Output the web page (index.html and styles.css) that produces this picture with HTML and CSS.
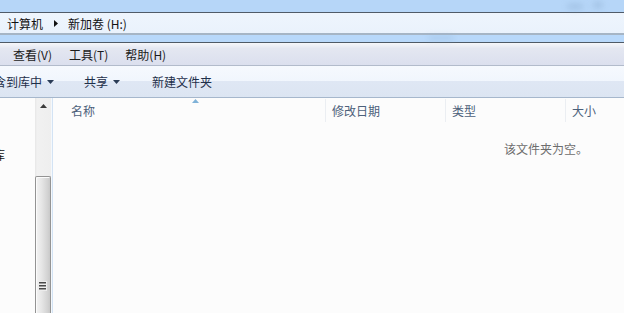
FILE: index.html
```html
<!DOCTYPE html>
<html lang="zh-CN">
<head>
<meta charset="utf-8">
<title>新加卷 (H:)</title>
<link rel="stylesheet" href="styles.css">
</head>
<body>
<div class="window">
  <div class="glass-top">
    <span class="glass-blur g1"></span>
    <span class="glass-blur g2"></span>
  </div>
  <div class="addr">
    <span class="crumb">计算机</span>
    <svg class="crumb-sep" width="4" height="7" viewBox="0 0 4 7"><path d="M0 0 L4 3.5 L0 7 Z" fill="#111"/></svg>
    <span class="crumb">新加卷 (H:)</span>
  </div>
  <div class="glass-mid"><span class="glass-blur g3"></span></div>
  <div class="menu">
    <span class="menu-item">查看(V)</span>
    <span class="menu-item">工具(T)</span>
    <span class="menu-item">帮助(H)</span>
  </div>
  <div class="cmd">
    <span class="cmd-item first">包含到库中<svg class="drop" width="7" height="4" viewBox="0 0 7 4"><path d="M0 0 H7 L3.5 4 Z" fill="#2a3c56"/></svg></span>
    <span class="cmd-item">共享<svg class="drop" width="7" height="4" viewBox="0 0 7 4"><path d="M0 0 H7 L3.5 4 Z" fill="#2a3c56"/></svg></span>
    <span class="cmd-item">新建文件夹</span>
  </div>
  <div class="main">
    <div class="nav">
      <span class="nav-label">库</span>
    </div>
    <div class="scroll">
      <div class="scroll-up"><svg width="7" height="4" viewBox="0 0 7 4"><path d="M0 4 H7 L3.5 0 Z" fill="#3a3a3a"/></svg></div>
      <div class="thumb">
        <div class="grip"><i></i><i></i><i></i></div>
      </div>
    </div>
    <div class="splitter"></div>
    <div class="content">
      <div class="headers">
        <svg class="sort" width="7" height="4" viewBox="0 0 7 4"><path d="M0 4 H7 L3.5 0 Z" fill="#7fb2d8"/></svg>
        <div class="col c-name">名称</div>
        <div class="col c-date">修改日期</div>
        <div class="col c-type">类型</div>
        <div class="col c-size">大小</div>
      </div>
      <div class="empty">该文件夹为空。</div>
    </div>
  </div>
</div>
</body>
</html>
```
FILE: styles.css
```css
* { box-sizing: border-box; }
html, body {
  margin: 0;
  padding: 0;
}
body {
  width: 624px;
  height: 313px;
  overflow: hidden;
  background: #fcfcfc;
  font-family: "Noto Sans CJK SC", "Microsoft YaHei", sans-serif;
  font-size: 12px;
}
.window {
  display: flex;
  flex-direction: column;
  height: 313px;
}
.glass-top {
  position: relative;
  height: 12px;
  background: #b6d6f8;
  flex: none;
}
.glass-blur {
  position: absolute;
  background: #8eaed0;
  filter: blur(3px);
  border-radius: 4px;
  opacity: 0.55;
}
.g1 { left: 567px; top: 4px; width: 16px; height: 5px; }
.g2 { left: 593px; top: 2px; width: 10px; height: 6px; }
.g3 { left: 428px; top: 1px; width: 26px; height: 4px; opacity: 0.4; }
.addr {
  flex: none;
  height: 23px;
  border-top: 1px solid #505b68;
  border-bottom: 2px solid #a6b5c5;
  background: linear-gradient(#eef5fd, #eaf2fc);
  display: flex;
  align-items: center;
  padding: 1px 0 0 7px;
  color: #111;
  line-height: 20px;
}
.crumb-sep {
  margin: 0 10px 0 11px;
}
.glass-mid {
  position: relative;
  flex: none;
  height: 8px;
  background: #b8d8fa;
  border-bottom: 1px solid #4f5a66;
}
.menu {
  flex: none;
  height: 23px;
  border-bottom: 1px solid #b2bbcb;
  background: linear-gradient(#f6f7fa, #e4e7f1 25%, #dbdfee);
  display: flex;
  align-items: center;
  padding: 1px 0 0 13px;
  gap: 17px;
  color: #1b1b1b;
}
.menu-item { line-height: 20px; }
.cmd {
  flex: none;
  height: 32px;
  border-bottom: 1px solid #a6b7cc;
  background: linear-gradient(#f6f9fe, #f1f6fd 48%, #dfe7f4 50%, #dce5f2);
  display: flex;
  align-items: center;
  color: #1e2f4a;
}
.cmd-item {
  display: flex;
  align-items: center;
  line-height: 20px;
  margin-right: 32px;
}
.cmd-item.first {
  margin-left: -18px;
  margin-right: 30px;
}
.drop { margin-left: 5px; }
.main {
  flex: 1;
  display: flex;
  min-height: 0;
}
.nav {
  width: 35px;
  flex: none;
  overflow: hidden;
  background: #fcfcfc;
}
.nav-label {
  display: block;
  margin-left: -7px;
  margin-top: 50px;
  color: #111;
  line-height: 14px;
}
.scroll {
  width: 16px;
  flex: none;
  background: linear-gradient(90deg, #e6e6e6, #f1f1f1 2px, #eeeeee);
  display: flex;
  flex-direction: column;
}
.scroll-up {
  height: 16px;
  display: flex;
  justify-content: center;
  padding-top: 6px;
}
.scroll-up svg { display: block; }
.thumb {
  margin-top: 62px;
  flex: 1;
  border: 1px solid #939393;
  border-bottom: none;
  border-radius: 2px 2px 0 0;
  background: linear-gradient(90deg, #f3f3f3, #e6e6e6 40%, #d4d4d4 80%, #c9c9c9);
  box-shadow: inset 1px 1px 0 #fbfbfb;
}
.grip {
  margin: 104px 0 0 2px;
  width: 9px;
  height: 10px;
  background: #ececec;
  display: flex;
  flex-direction: column;
  justify-content: center;
  gap: 1px;
  padding: 0 1px;
}
.grip i {
  display: block;
  height: 2px;
  background: linear-gradient(#4a4a4a 50%, #9a9a9a 50%);
}
.splitter {
  width: 2px;
  flex: none;
  background: linear-gradient(90deg, #f4f8fc 50%, #d3e3f4 50%);
}
.content {
  flex: 1;
  background: #fcfcfc;
}
.headers {
  position: relative;
  display: flex;
  height: 24px;
  padding-top: 1px;
  color: #4c607a;
}
.sort {
  position: absolute;
  left: 139px;
  top: 1px;
}
.col {
  height: 23px;
  line-height: 24px;
  padding-left: 6px;
  border-right: 1px solid #ebeef2;
}
.c-name { width: 273px; padding-left: 18px; }
.c-date { width: 120px; }
.c-type { width: 120px; }
.c-size { flex: 1; border-right: none; }
.empty {
  margin: 19px 0 0 451px;
  color: #6d6d6d;
  line-height: 16px;
}
```
